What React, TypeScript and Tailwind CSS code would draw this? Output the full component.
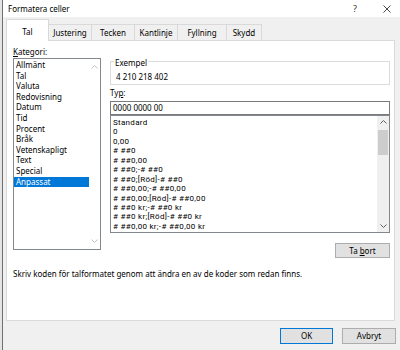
import { type FC } from 'react'

const tabs = [
  { label: 'Tal', w: 'w-[43px]' },
  { label: 'Justering', w: 'w-[43px]' },
  { label: 'Tecken', w: 'w-[43px]' },
  { label: 'Kantlinje', w: 'w-[43px]' },
  { label: 'Fyllning', w: 'w-[49px]' },
  { label: 'Skydd', w: 'w-[35px]' },
]

const categories = [
  'Allmänt',
  'Tal',
  'Valuta',
  'Redovisning',
  'Datum',
  'Tid',
  'Procent',
  'Bråk',
  'Vetenskapligt',
  'Text',
  'Special',
  'Anpassat',
]

const formats = [
  'Standard',
  '0',
  '0,00',
  '# ##0',
  '# ##0,00',
  '# ##0;-# ##0',
  '# ##0;[Röd]-# ##0',
  '# ##0,00;-# ##0,00',
  '# ##0,00;[Röd]-# ##0,00',
  '# ##0 kr;-# ##0 kr',
  '# ##0 kr;[Röd]-# ##0 kr',
  '# ##0,00 kr;-# ##0,00 kr',
]

const Chevron: FC<{ up?: boolean; color: string }> = ({ up, color }) => (
  <svg width="7" height="4" viewBox="0 0 7 4" fill="none">
    <path
      d={up ? 'M0.5 3.5L3.5 0.5L6.5 3.5' : 'M0.5 0.5L3.5 3.5L6.5 0.5'}
      stroke={color}
      strokeWidth="1"
    />
  </svg>
)

export default function App() {
  return (
    <div className="w-[400px] h-[350px] flex bg-[#f0f0f0] overflow-hidden text-[8px] text-black font-['Noto_Sans',sans-serif]">
      <div className="w-[2px] bg-[#e4e4e4]" />
      <div className="w-px bg-[#707070]" />
      <div className="flex-1 flex flex-col">
        {/* title bar */}
        <div className="h-[17px] bg-white flex items-center pl-[5px] leading-[10px]">
          <span className="text-[8px]">Formatera celler</span>
          <span className="ml-auto w-[8px] text-center text-[9px] text-[#333]">?</span>
          <span className="ml-[23px] mr-[8px] w-[10px] flex justify-center">
            <svg width="8" height="8" viewBox="0 0 8 8">
              <path d="M0.5 0.5L7.5 7.5M7.5 0.5L0.5 7.5" stroke="#333" strokeWidth="0.9" />
            </svg>
          </span>
        </div>

        {/* tabs */}
        <div className="flex items-end pl-[3px] mt-[2px] leading-[10px]">
          {tabs.map((t, i) =>
            i === 0 ? (
              <div
                key={t.label}
                className={`${t.w} h-[22px] bg-white border border-b-0 border-[#d9d9d9] relative z-10 -mb-px pt-[7px] text-center`}
              >
                {t.label}
              </div>
            ) : (
              <div
                key={t.label}
                className={`${t.w} h-[16px] border-t border-r border-[#d9d9d9] pt-[3px] text-center`}
              >
                {t.label}
              </div>
            ),
          )}
        </div>

        {/* panel */}
        <div className="ml-[3px] w-[389px] h-[281px] bg-white border border-[#d9d9d9] pl-[6px] pt-[6px] leading-[10px]">
          <div className="flex gap-[9px]">
            {/* left column */}
            <div className="w-[88px] flex flex-col">
              <div className="h-[10px]">
                <span className="underline">K</span>ategori:
              </div>
              <div className="mt-px h-[192px] border border-[#828790] flex">
                <div className="flex-1 pt-px">
                  {categories.map((c) => (
                    <div
                      key={c}
                      className={`h-[10.6px] leading-[10.6px] pl-[2px] ${
                        c === 'Anpassat' ? 'bg-[#0078d7] text-white' : ''
                      }`}
                    >
                      {c}
                    </div>
                  ))}
                </div>
                <div className="w-[11px] flex flex-col items-center justify-between py-[6px]">
                  <Chevron up color="#c2c2c2" />
                  <Chevron color="#c2c2c2" />
                </div>
              </div>
            </div>

            {/* right column */}
            <div className="w-[280px] flex flex-col">
              <div className="mt-[14px] h-[24px] border border-[#dcdcdc] relative pl-[5px] pt-[10px]">
                <span className="absolute -top-[4px] left-[3px] bg-white px-px">Exempel</span>
                4 210 218 402
              </div>
              <div className="mt-[3px] h-[10px]">
                Ty<span className="underline">p</span>:
              </div>
              <div className="mt-[3px] h-[14px] border border-[#7a7a7a] pl-[2px] leading-[12px]">
                0000 0000 00
              </div>
              <div className="h-[118px] border border-[#828790] flex">
                <div className="flex-1 pt-[2px] pl-[2px] font-['Roboto',sans-serif] text-[8px] tracking-[0.3px]">
                  {formats.map((f) => (
                    <div key={f} className="h-[9.45px] leading-[9.45px] whitespace-nowrap">
                      {f}
                    </div>
                  ))}
                </div>
                <div className="w-[12px] bg-[#f0f0f0] flex flex-col">
                  <div className="h-[12px] flex items-center justify-center">
                    <Chevron up color="#606060" />
                  </div>
                  <div className="mt-[2px] mx-px h-[25px] bg-[#cdcdcd]" />
                  <div className="mt-auto h-[12px] flex items-center justify-center">
                    <Chevron color="#606060" />
                  </div>
                </div>
              </div>
              <div className="mt-[10px] self-end w-[55px] h-[15px] bg-[#e1e1e1] border border-[#adadad] flex items-center justify-center">
                Ta <span className="underline ml-[2px]">b</span>ort
              </div>
            </div>
          </div>

          <div className="mt-[11px]">
            Skriv koden för talformatet genom att ändra en av de koder som redan finns.
          </div>
        </div>

        {/* footer */}
        <div className="mt-[7px] flex justify-end gap-[9px] pr-[4px] leading-[10px]">
          <div className="w-[53px] h-[16px] bg-[#e1e1e1] border border-[#0078d7] flex items-center justify-center">
            OK
          </div>
          <div className="w-[54px] h-[16px] bg-[#e1e1e1] border border-[#adadad] flex items-center justify-center">
            Avbryt
          </div>
        </div>
      </div>
    </div>
  )
}
